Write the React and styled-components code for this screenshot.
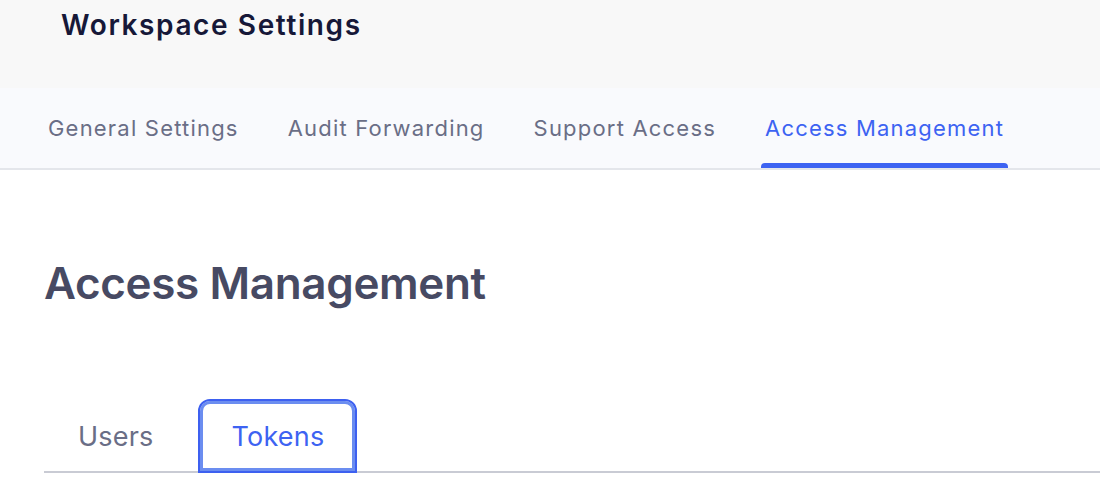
import React, {useState} from 'react';
import styled, {createGlobalStyle} from 'styled-components';

const GlobalStyle = createGlobalStyle`
  body{
    margin:0;
    background:#ffffff;
    font-family: Inter, "Noto Sans", sans-serif;
  }
`;

const Page = styled.div`
  width:1100px;
  height:490px;
  overflow:hidden;
`;

const Header = styled.header`
  height:88px;
  background-color:#f8f8f8;
  padding:7px 0 0 61px;
  box-sizing:border-box;
`;

const Title = styled.h1`
  margin:0;
  font-size:28px;
  line-height:36px;
  font-weight:600;
  letter-spacing:1.6px;
  color:#161838;
`;

const Nav = styled.nav`
  display:flex;
  gap:41px;
  height:82px;
  padding-left:44px;
  box-sizing:border-box;
  background-color:#f9fafd;
  border-bottom:2px solid #e4e6eb;
`;

const NavTab = styled.div`
  position:relative;
  display:flex;
  align-items:center;
  padding:0 4px;
  font-size:22px;
  letter-spacing:1.2px;
  color:${props => props.active ? '#3d63f2' : '#6a6e86'};
  &::after{
    content:'';
    display:${props => props.active ? 'block' : 'none'};
    position:absolute;
    left:0;
    right:0;
    bottom:0;
    height:5px;
    border-radius:4px 4px 0 0;
    background-color:#3d63f2;
  }
`;

const Content = styled.main`
  padding:84px 0 0 44px;
`;

const Heading = styled.h2`
  margin:0;
  font-size:44px;
  line-height:58px;
  font-weight:600;
  letter-spacing:-0.35px;
  color:#474a63;
`;

const SubTabs = styled.div`
  display:flex;
  gap:11px;
  margin-top:87px;
  border-bottom:2px solid #c9cbd4;
`;

const SubTab = styled.button`
  height:74px;
  margin-bottom:-2px;
  padding:0 31px 0 32px;
  box-sizing:border-box;
  font-family:inherit;
  font-size:27px;
  letter-spacing:0.2px;
  background:${props => props.active ? '#ffffff' : 'transparent'};
  color:${props => props.active ? '#3d63f2' : '#6a6e86'};
  border:${props => props.active ? '2px solid #3d60f0' : '2px solid transparent'};
  box-shadow:${props => props.active ? 'inset 0 0 0 3px #6b8df0' : 'none'};
  border-radius:12px 12px 0 0;
  cursor:pointer;
  outline:none;
`;

const App = () => {
    const [tab,setTab] = useState('tokens');
    const navItems = ['General Settings','Audit Forwarding','Support Access','Access Management'];

    return <Page>
        <GlobalStyle/>
        <Header>
            <Title>Workspace Settings</Title>
        </Header>
        <Nav>
            {navItems.map(item => <NavTab key={item} active={item==='Access Management'}>{item}</NavTab>)}
        </Nav>
        <Content>
            <Heading>Access Management</Heading>
            <SubTabs>
                <SubTab active={tab==='users'} onClick={() => setTab('users')}>Users</SubTab>
                <SubTab active={tab==='tokens'} onClick={() => setTab('tokens')}>Tokens</SubTab>
            </SubTabs>
        </Content>
    </Page>
};

export default App;
